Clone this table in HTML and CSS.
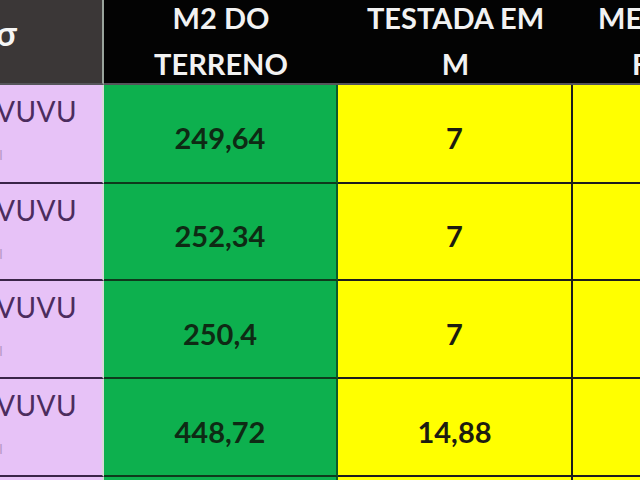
FILE: index.html
```html
<!DOCTYPE html>
<html>
<head>
<meta charset="utf-8">
<link rel="stylesheet" href="styles.css">
</head>
<body>
<div class="sheet">
  <div class="cell h h-left"><span class="glyph">σ</span></div>
  <div class="cell h h-dark"><div class="hl">M2 DO</div><div class="hl">TERRENO</div></div>
  <div class="cell h h-dark"><div class="hl">TESTADA EM</div><div class="hl">M</div></div>
  <div class="cell h h-dark h-last"><div class="hl l1">MEDIDA DE</div><div class="hl l2">FUNDO</div></div>

  <div class="cell pink"><div class="name">VUVU</div><div class="name2">I</div></div>
  <div class="cell green"><span class="num">249,64</span></div>
  <div class="cell yellow"><span class="num">7</span></div>
  <div class="cell yellow last"></div>

  <div class="cell pink"><div class="name">VUVU</div><div class="name2">I</div></div>
  <div class="cell green"><span class="num">252,34</span></div>
  <div class="cell yellow"><span class="num">7</span></div>
  <div class="cell yellow last"></div>

  <div class="cell pink"><div class="name">VUVU</div><div class="name2">I</div></div>
  <div class="cell green"><span class="num">250,4</span></div>
  <div class="cell yellow"><span class="num">7</span></div>
  <div class="cell yellow last"></div>

  <div class="cell pink"><div class="name">VUVU</div><div class="name2">I</div></div>
  <div class="cell green"><span class="num">448,72</span></div>
  <div class="cell yellow"><span class="num">14,88</span></div>
  <div class="cell yellow last"></div>

  <div class="cell pink"></div>
  <div class="cell green"></div>
  <div class="cell yellow"></div>
  <div class="cell yellow last"></div>
</div>
</body>
</html>
```

FILE: styles.css
```css
html, body {
  margin: 0;
  padding: 0;
  background: #ffffff;
  overflow: hidden;
}
.sheet {
  width: 640px;
  height: 480px;
  overflow: hidden;
  display: grid;
  grid-template-columns: 104px 234px 235px 100px;
  grid-template-rows: 85px 99px 97px 98px 98px 60px;
  font-family: Lato, "Open Sans", sans-serif;
}
.cell {
  box-sizing: border-box;
  overflow: hidden;
  border-bottom: 2px solid #1d1d1d;
  border-right: 2px solid #1d1d1d;
  display: flex;
  align-items: center;
  justify-content: center;
}
.h {
  background: #030303;
  color: #f2f2f2;
  font-weight: 700;
  font-size: 29px;
  flex-direction: column;
  justify-content: flex-start;
  border-bottom: 2px solid #55555a;
  border-right: none;
}
.h-left {
  background: #3b3737;
  border-right: 2px solid #9aa49c;
  align-items: flex-start;
}
.glyph {
  display: block;
  margin-top: 16px;
  margin-left: -4px;
  font-size: 34px;
  font-weight: 700;
  line-height: 34px;
  color: #f5f5f5;
}
.hl {
  flex-shrink: 0;
  height: 46px;
  line-height: 36px;
  white-space: nowrap;
}
.h-last {
  align-items: flex-start;
}
.l1 { padding-left: 25px; }
.l2 { padding-left: 59px; }
.pink {
  background: #e7c2f7;
  border-bottom-color: #3a2448;
  border-right: 2px solid #d8d8d8;
  flex-direction: column;
  align-items: flex-start;
  justify-content: flex-start;
  color: #4c2c5e;
}
.name {
  font-size: 28px;
  line-height: 30px;
  margin-top: 11px;
  margin-left: -4px;
  letter-spacing: 0.5px;
  white-space: nowrap;
}
.name2 {
  font-size: 14px;
  margin-top: 20px;
  margin-left: -1px;
  color: #b79ac8;
}
.green {
  background: #0db04e;
  border-bottom-color: #0e3a1c;
  border-right-color: #0d5a2a;
  color: #0e2a14;
}
.yellow {
  background: #ffff00;
  color: #1c1c10;
}
.last {
  border-right: none;
}
.num {
  font-weight: 700;
  font-size: 29px;
  padding-top: 8px;
}
```
